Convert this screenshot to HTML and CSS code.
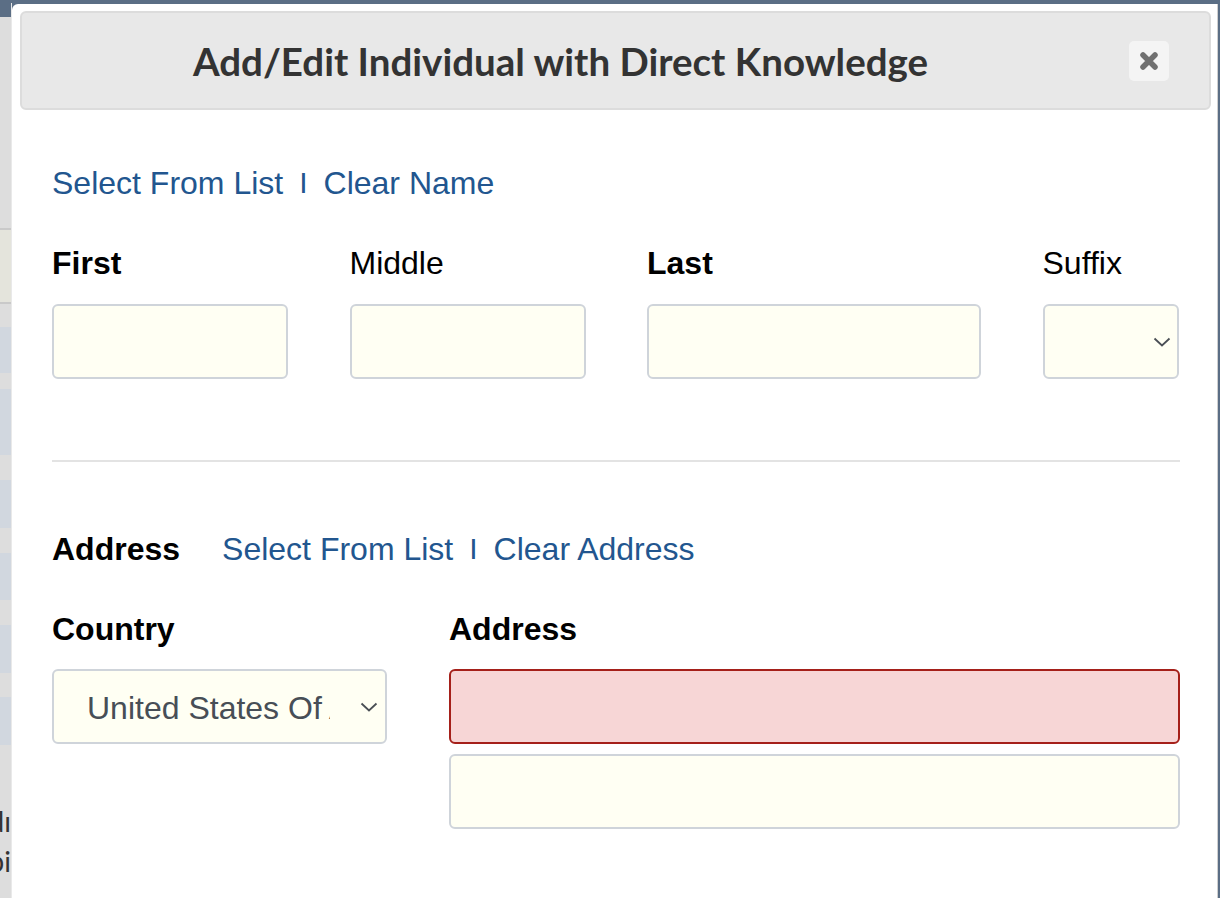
FILE: index.html
```html
<!DOCTYPE html>
<html lang="en">
<head>
<meta charset="utf-8">
<title>Add/Edit Individual with Direct Knowledge</title>
<link rel="stylesheet" href="styles.css">
</head>
<body>
<div class="topbar"></div>
<div class="stage">
  <div class="page-strip">
    <div class="strip-slate"></div>
    <div class="strip-gray h211"></div>
    <div class="strip-beige"></div>
    <div class="strip-gray h23"></div>
    <div class="strip-row h46"></div>
    <div class="strip-gray h16"></div>
    <div class="strip-row h66"></div>
    <div class="strip-gray h25"></div>
    <div class="strip-row h48"></div>
    <div class="strip-gray h25"></div>
    <div class="strip-row h47"></div>
    <div class="strip-gray h25"></div>
    <div class="strip-row h48"></div>
    <div class="strip-gray h24"></div>
    <div class="strip-row h48"></div>
    <div class="strip-gray h56"></div>
    <div class="strip-text"><span>Kindı</span></div>
    <div class="strip-text"><span>Topi</span></div>
  </div>

  <div class="modal">
    <div class="modal-header">
      <h4 class="modal-title">Add/Edit Individual with Direct Knowledge</h4>
      <button class="close-btn" type="button" aria-label="Close">
        <svg width="22" height="22" viewBox="0 0 22 22"><path d="M5 5 L17 17 M17 5 L5 17" stroke="#707070" stroke-width="5.5" stroke-linecap="round"/></svg>
      </button>
    </div>

    <div class="modal-body">
      <div class="link-row">
        <a class="link" href="#">Select From List</a>
        <span class="sep">I</span>
        <a class="link" href="#">Clear Name</a>
      </div>

      <div class="name-grid">
        <label class="lbl bold">First</label>
        <label class="lbl">Middle</label>
        <label class="lbl bold">Last</label>
        <label class="lbl">Suffix</label>
        <div class="field"></div>
        <div class="field"></div>
        <div class="field"></div>
        <div class="field select suffix">
          <svg class="chev" width="18" height="10" viewBox="0 0 18 10"><path d="M1.5 1.5 L9 8.5 L16.5 1.5" fill="none" stroke="#4a4f55" stroke-width="1.8"/></svg>
        </div>
      </div>

      <hr class="divider">

      <div class="addr-head">
        <span class="lbl bold">Address</span>
        <div class="link-row inline">
          <a class="link" href="#">Select From List</a>
          <span class="sep">I</span>
          <a class="link" href="#">Clear Address</a>
        </div>
      </div>

      <div class="addr-grid">
        <div class="col">
          <label class="lbl bold">Country</label>
          <div class="field select country">
            <span class="select-text">United States Of America</span>
            <svg class="chev" width="18" height="10" viewBox="0 0 18 10"><path d="M1.5 1.5 L9 8.5 L16.5 1.5" fill="none" stroke="#4a4f55" stroke-width="1.8"/></svg>
          </div>
        </div>
        <div class="col">
          <label class="lbl bold">Address</label>
          <div class="field error"></div>
          <div class="field second"></div>
        </div>
      </div>
    </div>
  </div>
</div>
</body>
</html>
```
FILE: styles.css
```css
* { box-sizing: border-box; }
html, body { margin: 0; padding: 0; }
body {
  width: 1220px;
  height: 898px;
  overflow: hidden;
  background: #dddddd;
  font-family: "Liberation Sans", Arial, sans-serif;
}
.topbar { height: 3px; background: #5b6e85; }
.stage { display: flex; height: 895px; background: #5b6e85; }

/* page behind the modal */
.page-strip {
  width: 12px;
  flex: none;
  display: flex;
  flex-direction: column;
  background: #dddddd;
  border-right: 1px solid #e9e9e9;
  overflow: hidden;
}
.strip-slate { height: 14px; background: #5b6e85; flex: none; }
.strip-gray { background: #dddddd; flex: none; }
.strip-beige {
  height: 76px; flex: none;
  background: #e4e4dc;
  border-top: 2px solid #c9c9c9;
  border-bottom: 2px solid #c9c9c9;
}
.strip-row { background: #d1d7df; flex: none; }
.h211 { height: 211px; }
.h23 { height: 23px; }
.h46 { height: 46px; }
.h16 { height: 16px; }
.h66 { height: 66px; }
.h25 { height: 25px; }
.h48 { height: 48px; }
.h47 { height: 47px; }
.h24 { height: 24px; }
.h56 { height: 56px; }
.strip-text {
  height: 40px;
  flex: none;
  display: flex;
  justify-content: flex-end;
  overflow: hidden;
  font-family: Lato, sans-serif;
  font-size: 28px;
  line-height: 40px;
  color: #333;
  white-space: nowrap;
}

/* modal */
.modal {
  flex: 1;
  background: #ffffff;
  border-top-left-radius: 6px;
  border-right: 1px solid #cfcfcf;
  margin-right: 2px;
  margin-top: 1px;
}
.modal-header {
  margin: 7px 6px 0 8px;
  height: 99px;
  background: #e8e8e8;
  border: 2px solid #dcdcdc;
  border-radius: 6px;
  display: flex;
  align-items: center;
}
.modal-title {
  flex: 1;
  margin: 0;
  padding-right: 30px;
  text-align: center;
  font-family: Lato, sans-serif;
  font-weight: 700;
  font-size: 38.5px;
  color: #333333;
}
.close-btn {
  width: 40px;
  height: 40px;
  margin-right: 40px;
  border: none;
  border-radius: 5px;
  background: #f4f4f4;
  display: flex;
  align-items: center;
  justify-content: center;
  padding: 0;
}
.close-btn svg { filter: blur(0.5px); }

.modal-body { padding: 0 37px 0 40px; }

.link-row {
  margin-top: 53px;
  height: 40px;
  display: flex;
  align-items: center;
  font-size: 32px;
  line-height: 40px;
}
.link-row.inline { margin-top: 0; }
.link { color: #22568f; text-decoration: none; }
.sep { color: #22568f; margin: 0 16px; font-size: 30px; }

.lbl {
  font-size: 32px;
  line-height: 40px;
  color: #000;
}
.bold { font-weight: 700; }

.name-grid {
  margin-top: 40px;
  display: grid;
  grid-template-columns: 236px 236px 334px 136px;
  column-gap: 61.5px;
  row-gap: 21px;
}

.field {
  height: 75px;
  background: #fffff3;
  border: 2px solid #cfd4da;
  border-radius: 6px;
}
.field.error {
  background: #f7d6d6;
  border-color: #a5201a;
}
.field.second { margin-top: 10px; height: 75px; }

.select {
  display: flex;
  align-items: center;
}
.suffix { justify-content: flex-end; padding-right: 6px; }
.select-text {
  overflow: hidden;
  white-space: nowrap;
  font-size: 32px;
  line-height: 40px;
  padding-top: 3px;
  color: #474e56;
}
.country { padding-left: 33px; margin-top: 20px; }
.country .select-text { width: 243px; flex: none; }
.country .chev { margin-left: auto; margin-right: 7px; }
.chev { flex: none; }

.divider {
  margin: 81px 0 0 0;
  border: none;
  height: 2px;
  background: #e3e3e3;
}

.addr-head {
  margin-top: 67px;
  height: 40px;
  display: flex;
  align-items: center;
  gap: 42px;
}

.addr-grid {
  margin-top: 40px;
  display: grid;
  grid-template-columns: 335px 1fr;
  column-gap: 62px;
}
.col { display: flex; flex-direction: column; }
.col .field.error { margin-top: 20px; }
```
